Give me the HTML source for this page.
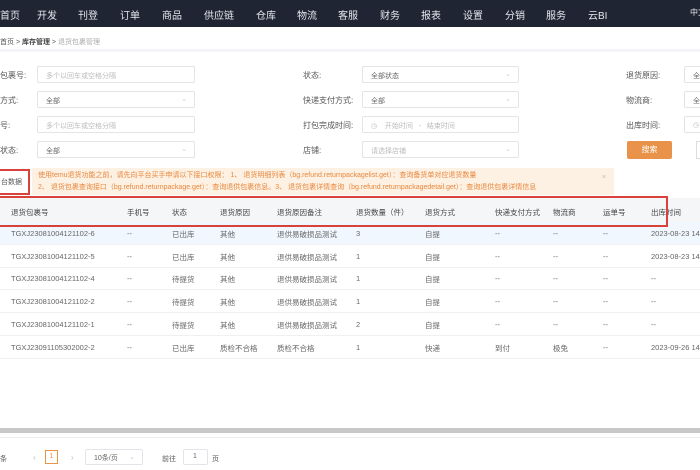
<!DOCTYPE html>
<html><head><meta charset="utf-8"><style>
*{margin:0;padding:0;box-sizing:border-box}
body{width:700px;height:470px;overflow:hidden;background:#fff;font-family:"Liberation Sans","Noto Sans CJK SC",sans-serif;font-size:8px;color:#555;position:relative}
.a{position:absolute;white-space:nowrap}
.nav{position:absolute;left:0;top:0;width:700px;height:27px;background:#1f2533}
.nav span{position:absolute;top:7px;color:#e6e8ee;font-size:10px;white-space:nowrap}
.crumb{position:absolute;top:29px;left:0;width:700px;height:23px;background:#fff;border-bottom:3px solid #f3f4f7}
.in{position:absolute;height:17px;border:1px solid #e2e4ea;border-radius:2px;background:#fff;font-size:7px;color:#bbb;padding:4px 8px;white-space:nowrap}
.in.v{color:#666}
.in .ar{position:absolute;right:7px;top:3px;color:#ccc}
.lab{position:absolute;font-size:8px;color:#555;white-space:nowrap}
.row{position:absolute;left:0;width:700px;height:23px;border-bottom:1px solid #eef0f3}
.row span{position:absolute;top:7px;font-size:7.5px;color:#666;white-space:nowrap}
</style></head><body>
<div class="nav">
<span style="left:0">首页</span><span style="left:37px">开发</span><span style="left:78px">刊登</span><span style="left:120px">订单</span><span style="left:162px">商品</span><span style="left:204px">供应链</span><span style="left:256px">仓库</span><span style="left:297px">物流</span><span style="left:338px">客服</span><span style="left:380px">财务</span><span style="left:421px">报表</span><span style="left:463px">设置</span><span style="left:505px">分销</span><span style="left:546px">服务</span><span style="left:588px">云BI</span><span style="left:690px;font-size:8px">中文</span>
</div>
<div class="crumb"><span class="a" style="left:0;top:8px;font-size:7px;color:#555">首页 &gt; <b style="color:#444">库存管理</b> &gt; <span style="color:#aaa">退货包裹管理</span></span></div>

<span class="lab" style="left:0;top:70px">包裹号:</span>
<div class="in" style="left:37px;top:66px;width:158px">多个以回车或空格分隔</div>
<span class="lab" style="left:0;top:95px">方式:</span>
<div class="in v" style="left:37px;top:91px;width:158px">全部<span class="ar">⌄</span></div>
<span class="lab" style="left:0;top:120px">号:</span>
<div class="in" style="left:37px;top:116px;width:158px">多个以回车或空格分隔</div>
<span class="lab" style="left:0;top:145px">状态:</span>
<div class="in v" style="left:37px;top:141px;width:158px">全部<span class="ar">⌄</span></div>

<span class="lab" style="left:303px;top:70px">状态:</span>
<div class="in v" style="left:362px;top:66px;width:157px">全部状态<span class="ar">⌄</span></div>
<span class="lab" style="left:303px;top:95px">快递支付方式:</span>
<div class="in v" style="left:362px;top:91px;width:157px">全部<span class="ar">⌄</span></div>
<span class="lab" style="left:303px;top:120px">打包完成时间:</span>
<div class="in" style="left:362px;top:116px;width:157px">◷ &nbsp;&nbsp;&nbsp;开始时间 &nbsp;&nbsp;- &nbsp;&nbsp;结束时间</div>
<span class="lab" style="left:303px;top:145px">店铺:</span>
<div class="in" style="left:362px;top:141px;width:157px">请选择店铺<span class="ar">⌄</span></div>

<span class="lab" style="left:626px;top:70px">退货原因:</span>
<div class="in v" style="left:684px;top:66px;width:30px">全</div>
<span class="lab" style="left:626px;top:95px">物流商:</span>
<div class="in v" style="left:684px;top:91px;width:30px">全</div>
<span class="lab" style="left:626px;top:120px">出库时间:</span>
<div class="in" style="left:684px;top:116px;width:30px">◷</div>
<div class="a" style="left:627px;top:141px;width:45px;height:18px;background:#e8924a;border-radius:2px;color:#fff;font-size:8px;text-align:center;line-height:18px">搜索</div>
<div class="a" style="left:696px;top:141px;width:10px;height:18px;border:1px solid #ddd"></div>

<div class="a" style="left:32px;top:168px;width:582px;height:27px;background:#fdf1e4"></div>
<span class="a" style="left:38px;top:170px;font-size:7px;color:#e8873a">使用temu退货功能之前，请先向平台买手申请以下接口权限： 1、 退货明细列表（bg.refund.returnpackagelist.get）：查询备货单对应退货数量</span>
<span class="a" style="left:38px;top:182px;font-size:7px;color:#e8873a">2、 退货包裹查询接口（bg.refund.returnpackage.get）：查询退供包裹信息。3、 退货包裹详情查询（bg.refund.returnpackagedetail.get）：查询退供包裹详情信息</span>
<span class="a" style="left:602px;top:174px;font-size:7px;color:#bbb">×</span>
<div class="a" style="left:-2px;top:169px;width:32px;height:26px;border:2px solid #d9423a;background:#fff;font-size:7px;color:#555;padding:6px 0 0 1px">台数据</div>

<div class="a" style="left:0;top:198px;width:700px;height:27px;background:#f5f6f8"></div>
<div class="row" style="top:200px;height:24px;border:none"><span style="left:11px;color:#444">退货包裹号</span><span style="left:127px;color:#444">手机号</span><span style="left:172px;color:#444">状态</span><span style="left:220px;color:#444">退货原因</span><span style="left:277px;color:#444">退货原因备注</span><span style="left:356px;color:#444">退货数量（件）</span><span style="left:425px;color:#444">退货方式</span><span style="left:495px;color:#444">快递支付方式</span><span style="left:553px;color:#444">物流商</span><span style="left:603px;color:#444">运单号</span><span style="left:651px;color:#444">出库时间</span></div>

<div class="row" style="top:222px;background:#f0f7ff"><span style="left:11px">TGXJ23081004121102-6</span><span style="left:127px">--</span><span style="left:172px">已出库</span><span style="left:220px">其他</span><span style="left:277px">退供易破损品测试</span><span style="left:356px">3</span><span style="left:425px">自提</span><span style="left:495px">--</span><span style="left:553px">--</span><span style="left:603px">--</span><span style="left:651px">2023-08-23 14</span></div>
<div class="row" style="top:245px"><span style="left:11px">TGXJ23081004121102-5</span><span style="left:127px">--</span><span style="left:172px">已出库</span><span style="left:220px">其他</span><span style="left:277px">退供易破损品测试</span><span style="left:356px">1</span><span style="left:425px">自提</span><span style="left:495px">--</span><span style="left:553px">--</span><span style="left:603px">--</span><span style="left:651px">2023-08-23 14</span></div>
<div class="row" style="top:267px"><span style="left:11px">TGXJ23081004121102-4</span><span style="left:127px">--</span><span style="left:172px">待提货</span><span style="left:220px">其他</span><span style="left:277px">退供易破损品测试</span><span style="left:356px">1</span><span style="left:425px">自提</span><span style="left:495px">--</span><span style="left:553px">--</span><span style="left:603px">--</span><span style="left:651px">--</span></div>
<div class="row" style="top:290px"><span style="left:11px">TGXJ23081004121102-2</span><span style="left:127px">--</span><span style="left:172px">待提货</span><span style="left:220px">其他</span><span style="left:277px">退供易破损品测试</span><span style="left:356px">1</span><span style="left:425px">自提</span><span style="left:495px">--</span><span style="left:553px">--</span><span style="left:603px">--</span><span style="left:651px">--</span></div>
<div class="row" style="top:313px"><span style="left:11px">TGXJ23081004121102-1</span><span style="left:127px">--</span><span style="left:172px">待提货</span><span style="left:220px">其他</span><span style="left:277px">退供易破损品测试</span><span style="left:356px">2</span><span style="left:425px">自提</span><span style="left:495px">--</span><span style="left:553px">--</span><span style="left:603px">--</span><span style="left:651px">--</span></div>
<div class="row" style="top:336px"><span style="left:11px">TGXJ23091105302002-2</span><span style="left:127px">--</span><span style="left:172px">已出库</span><span style="left:220px">质检不合格</span><span style="left:277px">质检不合格</span><span style="left:356px">1</span><span style="left:425px">快递</span><span style="left:495px">到付</span><span style="left:553px">极兔</span><span style="left:603px">--</span><span style="left:651px">2023-09-26 14</span></div>

<div class="a" style="left:-2px;top:196px;width:670px;height:31px;border:2px solid #d9423a;z-index:5"></div>

<div class="a" style="left:0;top:428px;width:700px;height:5px;background:#c8c8c8"></div>
<div class="a" style="left:0;top:437px;width:700px;height:1px;background:#eee"></div>
<span class="a" style="left:0;top:454px;font-size:7px">条</span>
<span class="a" style="left:33px;top:453px;font-size:8px;color:#bbb">‹</span>
<div class="a" style="left:45px;top:450px;width:13px;height:14px;border:1px solid #e8924a;color:#e8924a;font-size:7px;text-align:center;line-height:12px">1</div>
<span class="a" style="left:71px;top:453px;font-size:8px;color:#bbb">›</span>
<div class="in v" style="left:85px;top:449px;width:58px;height:16px;padding:3px 8px">10条/页<span class="ar">⌄</span></div>
<span class="a" style="left:162px;top:454px;font-size:7px">前往</span>
<div class="in v" style="left:183px;top:449px;width:25px;height:16px;padding:3px 9px">1</div>
<span class="a" style="left:212px;top:454px;font-size:7px">页</span>
</body></html>
